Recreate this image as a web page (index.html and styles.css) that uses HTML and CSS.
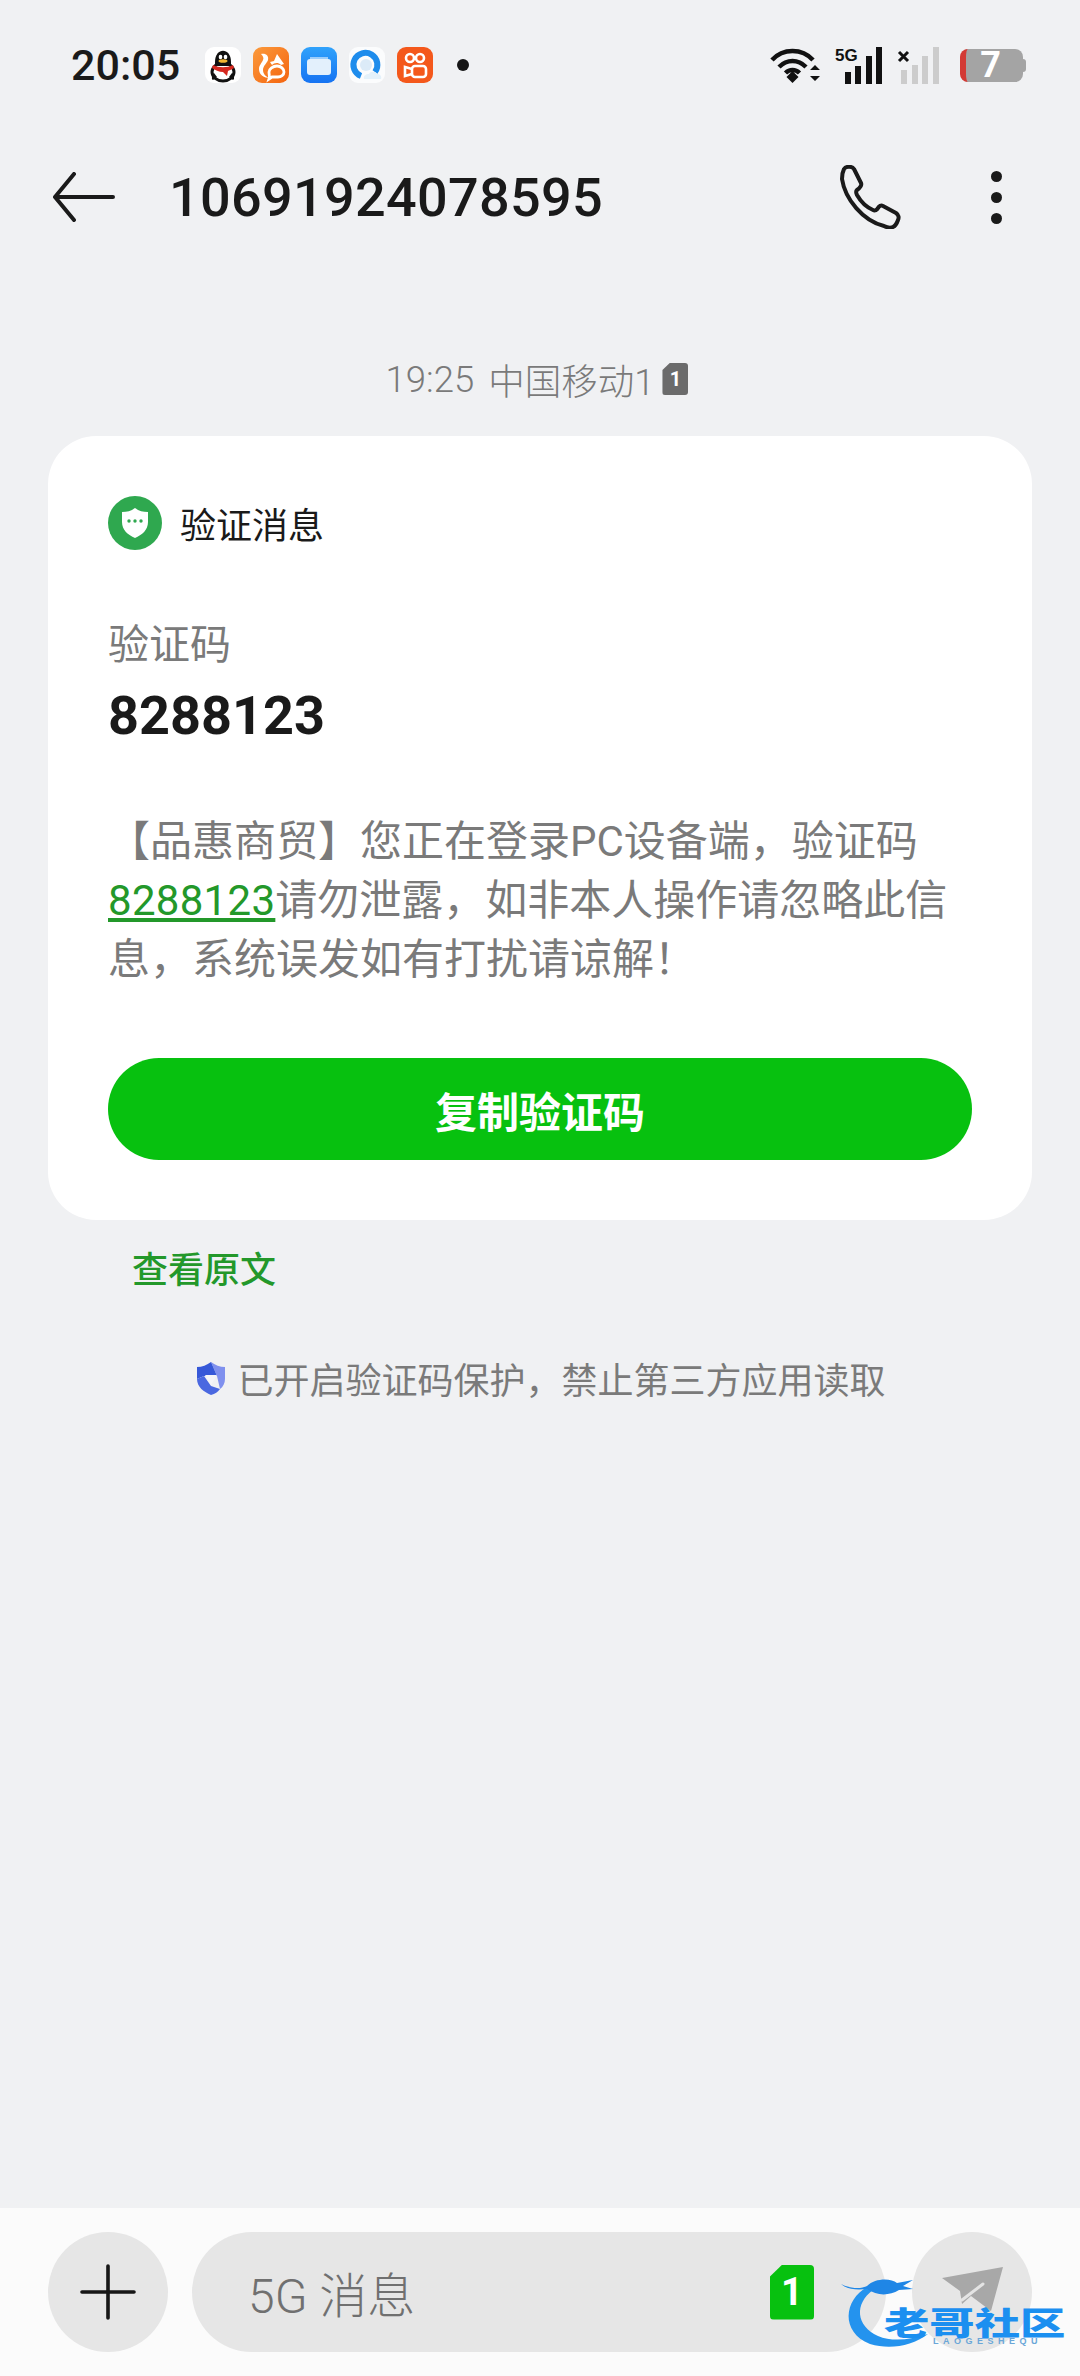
FILE: index.html
```html
<!DOCTYPE html>
<html lang="zh-CN">
<head>
    <meta charset="UTF-8">
    <meta name="viewport" content="width=device-width, initial-scale=1.0">
    <title>10691924078595</title>
    <link rel="stylesheet" href="styles.css">
</head>
<body>
    <div class="status">
        <span class="status__time">20:05</span>
        <div class="status__apps">
            <svg class="status__app" viewBox="0 0 36 36" aria-hidden="true">
                <rect width="36" height="36" rx="9" fill="#fff"/>
                <ellipse cx="18" cy="25" rx="11" ry="9" fill="#fff" stroke="#111" stroke-width="3"/>
                <path d="M10 15c0-15 16-15 16 0v4H10z" fill="#111"/>
                <path d="M9 26c-2 3-3 6-1 7l4-3zM27 26c2 3 3 6 1 7l-4-3z" fill="#111"/>
                <ellipse cx="15.500" cy="10" rx="1.800" ry="2.300" fill="#fff"/>
                <ellipse cx="20.500" cy="10" rx="1.800" ry="2.300" fill="#fff"/>
                <ellipse cx="18" cy="14" rx="4.500" ry="1.800" fill="#f2b632"/>
                <path d="M8 18c6 3 14 3 20 0l1 3c-3 2-5 2-6 3l-1 5-4-4c-4 0-8-2-11-4z" fill="#d5281f"/>
            </svg>
            <svg class="status__app" viewBox="0 0 36 36" aria-hidden="true">
                <defs>
                    <linearGradient id="uc" x1="0" y1="0" x2="1" y2="1"><stop offset="0" stop-color="#fb9a3c"/><stop offset="1" stop-color="#f4640f"/></linearGradient>
                </defs>
                <rect width="36" height="36" rx="9" fill="url(#uc)"/>
                <path d="M8 7c5-1 8 2 7 6-1 3-5 6-5 10 0 4 3 7 7 8-6 0-11-3-11-9 0-4 3-6 4-9 1-2 0-4-2-6z" fill="#fff"/>
                <path d="M24 7l7 10-3 1c-3-3-7-2-9 0l-2-3 4-1z" fill="#fff"/>
                <path d="M24 19c4 0 7 3 7 6s-3 5-6 5h-6l-3 2c1-3 0-4 0-7 0-3 4-6 8-6z" fill="none" stroke="#fff" stroke-width="2.800"/>
            </svg>
            <svg class="status__app" viewBox="0 0 36 36" aria-hidden="true">
                <defs>
                    <linearGradient id="files" x1="0" y1="0" x2="0" y2="1"><stop offset="0" stop-color="#30a2fb"/><stop offset="1" stop-color="#1673f2"/></linearGradient>
                </defs>
                <rect width="36" height="36" rx="9" fill="url(#files)"/>
                <path d="M9 10h18v4H9z" fill="#9ccdfb"/>
                <rect x="6" y="12" width="24" height="16" rx="3" fill="#e3f0fc"/>
            </svg>
            <svg class="status__app" viewBox="0 0 36 36" aria-hidden="true">
                <rect width="36" height="36" rx="9" fill="#fbfcfd"/>
                <circle cx="17" cy="18" r="6" fill="#dcebf8"/>
                <path d="M26 25A12 12 0 1 0 12 29" fill="none" stroke="#1e8cec" stroke-width="6"/>
                <path d="M15 32c-1-3 2-5 5-5 1-3 7-3 8 0 3 0 5 2 4 5z" fill="#e4f1fa"/>
            </svg>
            <svg class="status__app" viewBox="0 0 36 36" aria-hidden="true">
                <rect width="36" height="36" rx="9" fill="#f4581b"/>
                <g fill="none" stroke="#fff" stroke-width="2.600">
                    <circle cx="13" cy="11" r="4"/>
                    <circle cx="23" cy="11" r="4"/>
                    <rect x="15" y="19" width="14" height="11" rx="3"/>
                    <path d="M15 22l-7-2v9l7-2"/>
                </g>
            </svg>
            <span class="status__dot"></span>
        </div>
        <div class="status__system">
            <svg class="status__wifi" viewBox="0 0 50 36" aria-hidden="true">
                <g fill="none" stroke="#111" stroke-width="4.500">
                    <path d="M2 13C13 1 32 1 43 13"/>
                    <path d="M9 20c8-8 19-8 27 0"/>
                    <path d="M15.500 26c4-4 10-4 14 0"/>
                </g>
                <path d="M22.500 24l6 6-6 6-6-6z" fill="#111"/>
                <path d="M45 18l5 5H40zM45 34l5-5H40z" fill="#111"/>
            </svg>
            <svg class="status__signal" viewBox="0 0 104 37" aria-hidden="true">
                <text class="status__five" x="0" y="14">5G</text>
                <path d="M10 25h6v12h-6zM20 19h6v18h-6zM31 9h6v28h-6zM41 0h6v37h-6z" fill="#111"/>
                <path d="M64 5l9 9M73 5l-9 9" stroke="#111" stroke-width="3"/>
                <path d="M66 23h6v14h-6zM77 18h6v19h-6zM87 9h6v28h-6zM98 0h6v37h-6z" fill="#ccc"/>
            </svg>
            <div class="battery">
                <span class="battery__num">7</span>
            </div>
        </div>
    </div>

    <header class="topbar">
        <svg class="topbar__back" viewBox="0 0 62 50" aria-hidden="true">
            <path d="M21 2L2 25l19 23M2 25h58" fill="none" stroke="#1a1a1a" stroke-width="4" stroke-linecap="round" stroke-linejoin="round"/>
        </svg>
        <h1 class="topbar__title">10691924078595</h1>
        <svg class="topbar__phone" viewBox="0 0 64 64" aria-hidden="true">
            <path d="M5 4c2-3 8-3 10 0l7 14c1 2-1 5-4 7-1 1-1 3 0 5 4 7 9 12 16 15 2 1 4 0 5-2 1-2 3-3 5-2l13 7c3 2 3 5 2 7-1 3-3 6-5 7-2 1-5 1-9-1C24 56 6 34 3 14 3 10 4 6 5 4z" fill="none" stroke="#1a1a1a" stroke-width="4" stroke-linejoin="round"/>
        </svg>
        <div class="topbar__more">
            <span></span><span></span><span></span>
        </div>
    </header>

    <div class="stamp">
        <span>19:25</span>
        <span>中国移动1</span>
        <span class="sim sim--gray">1</span>
    </div>

    <main class="card">
        <div class="card__head">
            <svg class="card__icon" viewBox="0 0 54 54" aria-hidden="true">
                <circle cx="27" cy="27" r="27" fill="#2fa84f"/>
                <path d="M27 12c4 3 8 4 13 4v10c0 8-6 13-13 16-7-3-13-8-13-16V16c5 0 9-1 13-4z" fill="#fff"/>
                <circle cx="21" cy="25" r="1.700" fill="#2fa84f"/>
                <circle cx="27" cy="25" r="1.700" fill="#2fa84f"/>
                <circle cx="33" cy="25" r="1.700" fill="#2fa84f"/>
            </svg>
            <span class="card__name">验证消息</span>
        </div>
        <div class="card__label">验证码</div>
        <div class="card__code">8288123</div>
        <p class="card__text">【品惠商贸】您正在登录PC设备端，验证码<a class="card__link">8288123</a>请勿泄露，如非本人操作请忽略此信息，系统误发如有打扰请谅解！</p>
        <button class="card__btn" type="button">复制验证码</button>
    </main>

    <a class="origin">查看原文</a>

    <div class="notice">
        <svg class="notice__icon" viewBox="0 0 28 33" aria-hidden="true">
            <path d="M14 0c4 3 9 5 14 5v12c0 4-2 8-5 10L20 14z" fill="#7f90ee"/>
            <path d="M14 0C10 3 5 5 0 5v12l7-3 13 0z" fill="#3658d8"/>
            <path d="M0 17c0 8 7 13 14 16 4-1 7-3 9-6l-9-3-7-10z" fill="#4a68e0"/>
            <path d="M8 13h12l-6 10z" fill="#f4f5f8"/>
        </svg>
        <span>已开启验证码保护，禁止第三方应用读取</span>
    </div>

    <footer class="bottom">
        <div class="round">
            <svg class="round__plus" viewBox="0 0 56 56" aria-hidden="true">
                <path d="M28 2v52M2 28h52" stroke="#161616" stroke-width="3.600" stroke-linecap="round"/>
            </svg>
        </div>
        <div class="field">
            <span class="field__hint">5G 消息</span>
            <span class="sim sim--green">1</span>
        </div>
        <div class="round round--send">
            <svg class="round__send" viewBox="0 0 62 50" aria-hidden="true">
                <path d="M1 11L62 0 50 44 30 29l-9 8-2-13z" fill="#a8a8a8"/>
                <path d="M21 33L42 17" stroke="#e4e4e4" stroke-width="3" stroke-linecap="round"/>
            </svg>
        </div>
    </footer>

    <div class="mark">
        <svg class="mark__swoosh" viewBox="0 0 100 80" aria-hidden="true">
            <path d="M27 17C4 30 0 62 30 74c20 6 42 2 58-10-18 6-36 8-50 2C16 56 14 34 33 20z" fill="#2493ee"/>
            <path d="M1 14c10 5 20 5 26 2 8-8 24-8 30-3l16-3-10 6 10 3-14 1c-10 6-22 6-32-1C18 20 8 20 1 14z" fill="#1f86e6"/>
        </svg>
        <span class="mark__name">老哥社区</span>
        <span class="mark__latin">LAOGESHEQU</span>
    </div>
</body>
</html>
```

FILE: styles.css
```css
* {
    border: 0;
    box-sizing: border-box;
    margin: 0;
    padding: 0;
}
:root {
    --bg: #f0f1f3;
    --fg: #1a1a1a;
    --gray: #7a7a7a;
    --green: #07c10f;
    --link: #23982a;
    --field: #e6e6e6;
}
body {
    background-color: var(--bg);
    color: var(--fg);
    display: flex;
    flex-direction: column;
    font-family: Roboto, "Noto Sans CJK SC", sans-serif;
    height: 2376px;
    overflow: hidden;
    position: relative;
    width: 1080px;
}

/* Status bar */
.status {
    align-items: center;
    display: flex;
    flex-shrink: 0;
    height: 130px;
    padding: 0 57px 0 71px;
}
.status__time {
    font-size: 43px;
    font-weight: 500;
    width: 134px;
}
.status__apps {
    align-items: center;
    display: flex;
    gap: 12px;
}
.status__app {
    display: block;
    height: 36px;
    width: 36px;
}
.status__dot {
    background-color: #161616;
    border-radius: 50%;
    height: 12px;
    margin-left: 12px;
    width: 12px;
}
.status__system {
    align-items: center;
    display: flex;
    margin-left: auto;
}
.status__wifi {
    display: block;
    height: 36px;
    width: 50px;
}
.status__signal {
    display: block;
    height: 37px;
    margin-left: 15px;
    width: 104px;
}
.status__five {
    font: 700 17px "Liberation Sans", sans-serif;
    fill: #111;
}
.battery {
    align-items: center;
    background-color: #a4a4a4;
    border-left: 6px solid #d33a35;
    border-radius: 8px;
    display: flex;
    height: 33px;
    justify-content: center;
    margin-left: 21px;
    padding-right: 8px;
    position: relative;
    width: 63px;
}
.battery:after {
    background-color: #a4a4a4;
    border-radius: 0 3px 3px 0;
    content: "";
    height: 13px;
    position: absolute;
    right: -3px;
    top: 10px;
    width: 3px;
}
.battery__num {
    color: #fff;
    font-size: 36px;
    font-weight: 700;
    line-height: 1;
}

/* Top bar */
.topbar {
    align-items: center;
    display: flex;
    flex-shrink: 0;
    height: 134px;
    padding: 0 78px 0 53px;
}
.topbar__back {
    display: block;
    height: 50px;
    width: 62px;
}
.topbar__title {
    font-size: 54px;
    font-weight: 500;
    letter-spacing: 0.3px;
    margin-left: 54px;
}
.topbar__phone {
    display: block;
    height: 64px;
    margin-left: auto;
    width: 64px;
}
.topbar__more {
    display: flex;
    flex-direction: column;
    gap: 10px;
    margin-left: 88px;
}
.topbar__more span {
    background-color: var(--fg);
    border-radius: 50%;
    display: block;
    height: 11px;
    width: 11px;
}

/* Time stamp */
.stamp {
    align-items: center;
    color: var(--gray);
    display: flex;
    flex-shrink: 0;
    font-size: 36.500px;
    font-weight: 300;
    height: 50px;
    justify-content: center;
    gap: 14px;
    margin: 90px 0 32px;
    padding-right: 6px;
}
.sim {
    align-items: center;
    clip-path: polygon(28% 0, 100% 0, 100% 100%, 0 100%, 0 22%);
    color: #fff;
    display: flex;
    font-weight: 700;
    justify-content: center;
}
.sim--gray {
    background-color: #6b6b6b;
    border-radius: 3px;
    font-size: 20px;
    height: 32px;
    margin-left: -6px;
    width: 26px;
}
.sim--green {
    background-color: var(--green);
    border-radius: 4px;
    font-size: 38px;
    height: 55px;
    margin-left: auto;
    width: 44px;
}

/* Card */
.card {
    background-color: #fff;
    border-radius: 48px;
    flex-shrink: 0;
    margin: 0 48px;
    padding: 60px;
}
.card__head {
    align-items: center;
    display: flex;
    gap: 18px;
    height: 54px;
}
.card__icon {
    display: block;
    height: 54px;
    width: 54px;
}
.card__name {
    font-size: 36px;
}
.card__label {
    color: var(--gray);
    font-size: 41px;
    line-height: 50px;
    margin-top: 70px;
}
.card__code {
    font-size: 54px;
    font-weight: 700;
    line-height: 66px;
    margin-top: 13px;
}
.card__text {
    color: var(--gray);
    font-size: 42px;
    line-height: 59px;
    margin-top: 63px;
}
.card__link {
    color: var(--link);
    letter-spacing: 0.3px;
    text-decoration: underline;
}
.card__btn {
    background-color: var(--green);
    border-radius: 51px;
    color: #fff;
    display: block;
    font: 700 42px Roboto, "Noto Sans CJK SC", sans-serif;
    height: 102px;
    margin-top: 69px;
    width: 100%;
}

/* Below the card */
.origin {
    color: var(--link);
    flex-shrink: 0;
    font-size: 36px;
    font-weight: 500;
    line-height: 50px;
    margin: 26px 0 0 132px;
}
.notice {
    align-items: center;
    color: var(--gray);
    display: flex;
    flex-shrink: 0;
    font-size: 36px;
    gap: 12px;
    height: 50px;
    justify-content: center;
    margin-top: 57px;
    padding-left: 3px;
}
.notice__icon {
    display: block;
    height: 33px;
    width: 28px;
}

/* Input bar */
.bottom {
    align-items: center;
    background-color: #fbfbfb;
    display: flex;
    flex-shrink: 0;
    gap: 24px;
    height: 168px;
    margin-top: auto;
    padding: 0 48px;
}
.round {
    align-items: center;
    background-color: var(--field);
    border-radius: 50%;
    display: flex;
    flex-shrink: 0;
    height: 120px;
    justify-content: center;
    width: 120px;
}
.round--send {
    margin-left: 2px;
}
.round__plus {
    display: block;
    height: 56px;
    width: 56px;
}
.round__send {
    display: block;
    height: 50px;
    width: 62px;
}
.field {
    align-items: center;
    background-color: var(--field);
    border-radius: 60px;
    display: flex;
    flex: 1;
    height: 120px;
    padding: 0 72px 0 56px;
}
.field__hint {
    color: #707070;
    font-size: 48px;
    font-weight: 300;
}

/* Watermark over the corner */
.mark {
    bottom: 24px;
    height: 82px;
    position: absolute;
    right: 16px;
    width: 224px;
}
.mark__swoosh {
    display: block;
    height: 80px;
    left: 0;
    position: absolute;
    top: 0;
    width: 100px;
}
.mark__name {
    color: #1b8ff0;
    font-family: "Noto Sans CJK SC", sans-serif;
    font-size: 44px;
    font-weight: 900;
    left: 44px;
    line-height: 44px;
    position: absolute;
    top: 23px;
    transform: scale(1.03, 0.72);
    transform-origin: left bottom;
    white-space: nowrap;
}
.mark__latin {
    color: #6aa6d8;
    font: 700 9px "Liberation Sans", sans-serif;
    left: 93px;
    letter-spacing: 4.500px;
    position: absolute;
    top: 66px;
}
```
